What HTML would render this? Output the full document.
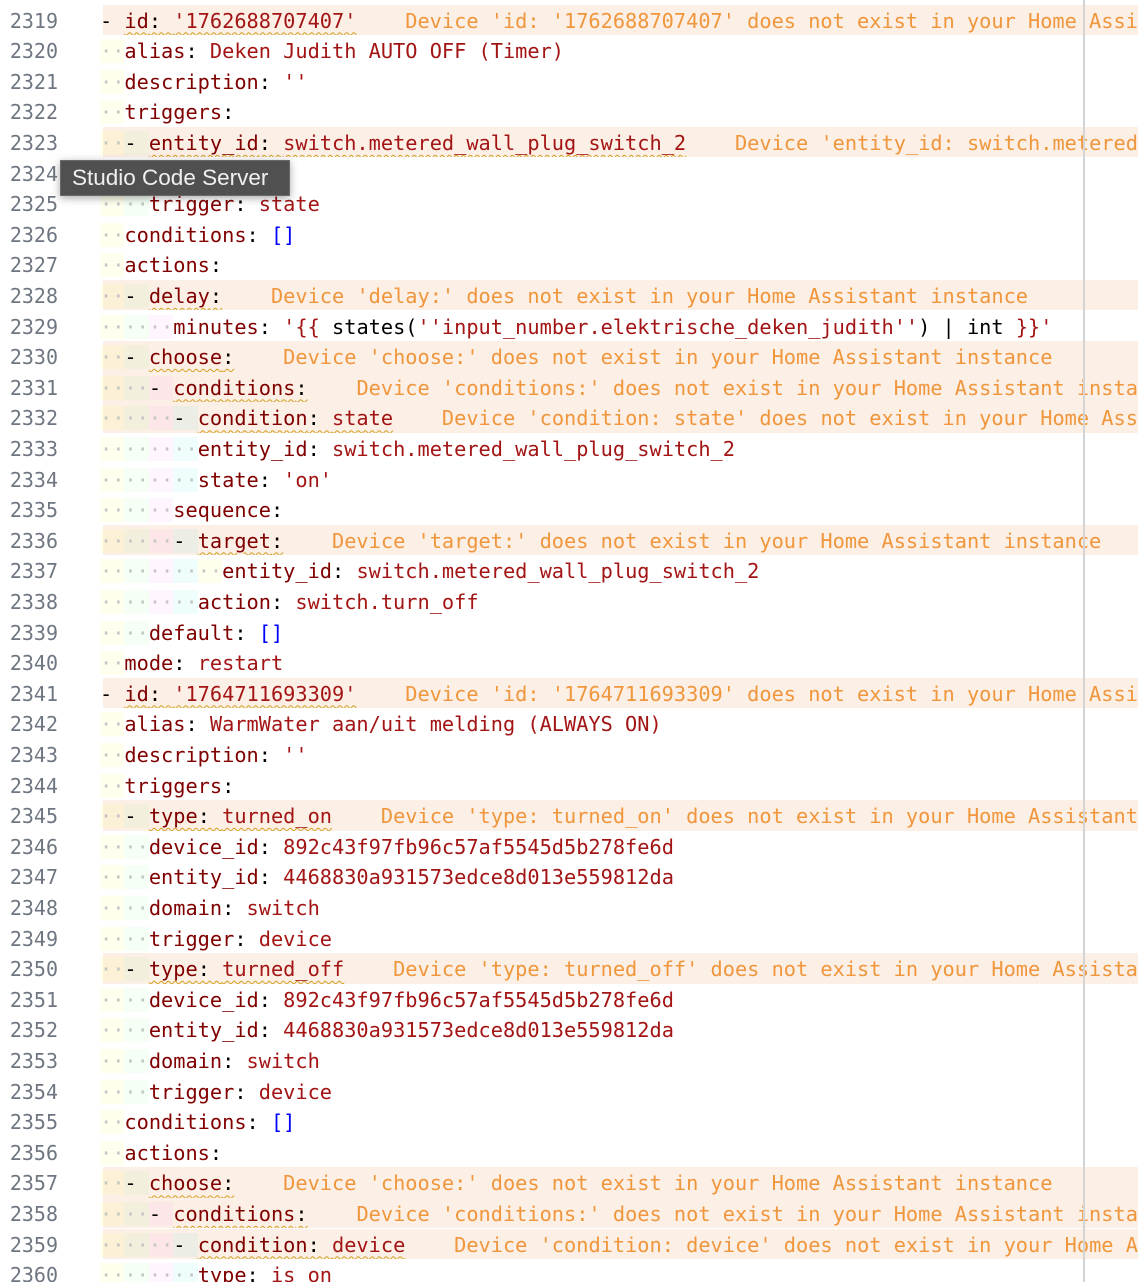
<!DOCTYPE html>
<html><head><meta charset="utf-8"><style>
body{margin:0;width:1138px;height:1282px;overflow:hidden;background:#fff;position:relative;font-family:"DejaVu Sans Mono","Liberation Mono",monospace}
.r{position:absolute;left:0;width:1138px;height:30.6px;overflow:hidden}
.w{position:absolute;left:103px;right:0;top:0;bottom:0;background:#fcefe5}
.n{position:absolute;left:0;width:58px;text-align:right;color:#6e7681;font-size:20px;line-height:30.6px;top:1px}
.c{position:absolute;left:100px;top:1px;white-space:pre;font-size:20.3px;line-height:30.6px;color:#000}
.d{color:#c4c4c4}
.a{background:rgba(255,255,64,.09)}.b{background:rgba(127,255,127,.08)}.p{background:rgba(255,127,255,.08)}.q{background:rgba(79,236,236,.09)}.e{background:rgba(255,255,64,.09)}
.k{color:#800000}.v{color:#a31515}.bl{color:#0000ff}
.u{text-decoration:underline wavy #d4a020;text-decoration-thickness:1px;text-underline-offset:4px}
.m{color:#f0963c}
.ruler{position:absolute;left:1083px;top:0;width:2px;height:1282px;background:#d4d4d4}
.tip{position:absolute;left:60px;top:160px;width:230px;height:36px;background:#505050;border:1px solid #6a6a6a;box-sizing:border-box;color:#f0f0f0;font-family:"Liberation Sans",sans-serif;font-size:22.5px;line-height:34px;padding-left:11px;white-space:nowrap;overflow:hidden;box-shadow:0 2px 8px rgba(0,0,0,.35)}
</style></head><body>
<div class="r" style="top:4.5px"><div class="w"></div><div class="n">2319</div><div class="c">- <span class="u"><span class="k">id</span>: <span class="v">'1762688707407'</span></span>    <span class="m">Device 'id: '1762688707407' does not exist in your Home Assistant instance</span></div></div>
<div class="r" style="top:35.1px"><div class="n">2320</div><div class="c"><span class="d a">··</span><span class="k">alias</span>: <span class="v">Deken Judith AUTO OFF (Timer)</span></div></div>
<div class="r" style="top:65.7px"><div class="n">2321</div><div class="c"><span class="d a">··</span><span class="k">description</span>: <span class="v">''</span></div></div>
<div class="r" style="top:96.3px"><div class="n">2322</div><div class="c"><span class="d a">··</span><span class="k">triggers</span>:</div></div>
<div class="r" style="top:126.9px"><div class="w"></div><div class="n">2323</div><div class="c"><span class="d a">··</span><span class="b">- </span><span class="u"><span class="k">entity_id</span>: <span class="v">switch.metered_wall_plug_switch_2</span></span>    <span class="m">Device 'entity_id: switch.metered_wall_plug_switch_2' does not exist</span></div></div>
<div class="r" style="top:157.5px"><div class="n">2324</div><div class="c"><span class="d a">··</span><span class="d b">··</span><span class="k">to</span>: <span class="v">'on'</span></div></div>
<div class="r" style="top:188.1px"><div class="n">2325</div><div class="c"><span class="d a">··</span><span class="d b">··</span><span class="k">trigger</span>: <span class="v">state</span></div></div>
<div class="r" style="top:218.7px"><div class="n">2326</div><div class="c"><span class="d a">··</span><span class="k">conditions</span>: <span class="bl">[]</span></div></div>
<div class="r" style="top:249.3px"><div class="n">2327</div><div class="c"><span class="d a">··</span><span class="k">actions</span>:</div></div>
<div class="r" style="top:279.9px"><div class="w"></div><div class="n">2328</div><div class="c"><span class="d a">··</span><span class="b">- </span><span class="u"><span class="k">delay</span>:</span>    <span class="m">Device 'delay:' does not exist in your Home Assistant instance</span></div></div>
<div class="r" style="top:310.5px"><div class="n">2329</div><div class="c"><span class="d a">··</span><span class="d b">··</span><span class="d p">··</span><span class="k">minutes</span>: <span class="v">'{{</span> states(<span class="v">''input_number.elektrische_deken_judith''</span>) | int <span class="v">}}'</span></div></div>
<div class="r" style="top:341.1px"><div class="w"></div><div class="n">2330</div><div class="c"><span class="d a">··</span><span class="b">- </span><span class="u"><span class="k">choose</span>:</span>    <span class="m">Device 'choose:' does not exist in your Home Assistant instance</span></div></div>
<div class="r" style="top:371.7px"><div class="w"></div><div class="n">2331</div><div class="c"><span class="d a">··</span><span class="d b">··</span><span class="p">- </span><span class="u"><span class="k">conditions</span>:</span>    <span class="m">Device 'conditions:' does not exist in your Home Assistant instance</span></div></div>
<div class="r" style="top:402.3px"><div class="w"></div><div class="n">2332</div><div class="c"><span class="d a">··</span><span class="d b">··</span><span class="d p">··</span><span class="q">- </span><span class="u"><span class="k">condition</span>: <span class="v">state</span></span>    <span class="m">Device 'condition: state' does not exist in your Home Assistant instance</span></div></div>
<div class="r" style="top:432.9px"><div class="n">2333</div><div class="c"><span class="d a">··</span><span class="d b">··</span><span class="d p">··</span><span class="d q">··</span><span class="k">entity_id</span>: <span class="v">switch.metered_wall_plug_switch_2</span></div></div>
<div class="r" style="top:463.5px"><div class="n">2334</div><div class="c"><span class="d a">··</span><span class="d b">··</span><span class="d p">··</span><span class="d q">··</span><span class="k">state</span>: <span class="v">'on'</span></div></div>
<div class="r" style="top:494.1px"><div class="n">2335</div><div class="c"><span class="d a">··</span><span class="d b">··</span><span class="d p">··</span><span class="k">sequence</span>:</div></div>
<div class="r" style="top:524.7px"><div class="w"></div><div class="n">2336</div><div class="c"><span class="d a">··</span><span class="d b">··</span><span class="d p">··</span><span class="q">- </span><span class="u"><span class="k">target</span>:</span>    <span class="m">Device 'target:' does not exist in your Home Assistant instance</span></div></div>
<div class="r" style="top:555.3px"><div class="n">2337</div><div class="c"><span class="d a">··</span><span class="d b">··</span><span class="d p">··</span><span class="d q">··</span><span class="d e">··</span><span class="k">entity_id</span>: <span class="v">switch.metered_wall_plug_switch_2</span></div></div>
<div class="r" style="top:585.9px"><div class="n">2338</div><div class="c"><span class="d a">··</span><span class="d b">··</span><span class="d p">··</span><span class="d q">··</span><span class="k">action</span>: <span class="v">switch.turn_off</span></div></div>
<div class="r" style="top:616.5px"><div class="n">2339</div><div class="c"><span class="d a">··</span><span class="d b">··</span><span class="k">default</span>: <span class="bl">[]</span></div></div>
<div class="r" style="top:647.1px"><div class="n">2340</div><div class="c"><span class="d a">··</span><span class="k">mode</span>: <span class="v">restart</span></div></div>
<div class="r" style="top:677.7px"><div class="w"></div><div class="n">2341</div><div class="c">- <span class="u"><span class="k">id</span>: <span class="v">'1764711693309'</span></span>    <span class="m">Device 'id: '1764711693309' does not exist in your Home Assistant instance</span></div></div>
<div class="r" style="top:708.3px"><div class="n">2342</div><div class="c"><span class="d a">··</span><span class="k">alias</span>: <span class="v">WarmWater aan/uit melding (ALWAYS ON)</span></div></div>
<div class="r" style="top:738.9px"><div class="n">2343</div><div class="c"><span class="d a">··</span><span class="k">description</span>: <span class="v">''</span></div></div>
<div class="r" style="top:769.5px"><div class="n">2344</div><div class="c"><span class="d a">··</span><span class="k">triggers</span>:</div></div>
<div class="r" style="top:800.1px"><div class="w"></div><div class="n">2345</div><div class="c"><span class="d a">··</span><span class="b">- </span><span class="u"><span class="k">type</span>: <span class="v">turned_on</span></span>    <span class="m">Device 'type: turned_on' does not exist in your Home Assistant instance</span></div></div>
<div class="r" style="top:830.7px"><div class="n">2346</div><div class="c"><span class="d a">··</span><span class="d b">··</span><span class="k">device_id</span>: <span class="v">892c43f97fb96c57af5545d5b278fe6d</span></div></div>
<div class="r" style="top:861.3px"><div class="n">2347</div><div class="c"><span class="d a">··</span><span class="d b">··</span><span class="k">entity_id</span>: <span class="v">4468830a931573edce8d013e559812da</span></div></div>
<div class="r" style="top:891.9px"><div class="n">2348</div><div class="c"><span class="d a">··</span><span class="d b">··</span><span class="k">domain</span>: <span class="v">switch</span></div></div>
<div class="r" style="top:922.5px"><div class="n">2349</div><div class="c"><span class="d a">··</span><span class="d b">··</span><span class="k">trigger</span>: <span class="v">device</span></div></div>
<div class="r" style="top:953.1px"><div class="w"></div><div class="n">2350</div><div class="c"><span class="d a">··</span><span class="b">- </span><span class="u"><span class="k">type</span>: <span class="v">turned_off</span></span>    <span class="m">Device 'type: turned_off' does not exist in your Home Assistant instance</span></div></div>
<div class="r" style="top:983.7px"><div class="n">2351</div><div class="c"><span class="d a">··</span><span class="d b">··</span><span class="k">device_id</span>: <span class="v">892c43f97fb96c57af5545d5b278fe6d</span></div></div>
<div class="r" style="top:1014.3px"><div class="n">2352</div><div class="c"><span class="d a">··</span><span class="d b">··</span><span class="k">entity_id</span>: <span class="v">4468830a931573edce8d013e559812da</span></div></div>
<div class="r" style="top:1044.9px"><div class="n">2353</div><div class="c"><span class="d a">··</span><span class="d b">··</span><span class="k">domain</span>: <span class="v">switch</span></div></div>
<div class="r" style="top:1075.5px"><div class="n">2354</div><div class="c"><span class="d a">··</span><span class="d b">··</span><span class="k">trigger</span>: <span class="v">device</span></div></div>
<div class="r" style="top:1106.1px"><div class="n">2355</div><div class="c"><span class="d a">··</span><span class="k">conditions</span>: <span class="bl">[]</span></div></div>
<div class="r" style="top:1136.7px"><div class="n">2356</div><div class="c"><span class="d a">··</span><span class="k">actions</span>:</div></div>
<div class="r" style="top:1167.3px"><div class="w"></div><div class="n">2357</div><div class="c"><span class="d a">··</span><span class="b">- </span><span class="u"><span class="k">choose</span>:</span>    <span class="m">Device 'choose:' does not exist in your Home Assistant instance</span></div></div>
<div class="r" style="top:1197.9px"><div class="w"></div><div class="n">2358</div><div class="c"><span class="d a">··</span><span class="d b">··</span><span class="p">- </span><span class="u"><span class="k">conditions</span>:</span>    <span class="m">Device 'conditions:' does not exist in your Home Assistant instance</span></div></div>
<div class="r" style="top:1228.5px"><div class="w"></div><div class="n">2359</div><div class="c"><span class="d a">··</span><span class="d b">··</span><span class="d p">··</span><span class="q">- </span><span class="u"><span class="k">condition</span>: <span class="v">device</span></span>    <span class="m">Device 'condition: device' does not exist in your Home Assistant instance</span></div></div>
<div class="r" style="top:1259.1px;height:22.9px"><div class="n">2360</div><div class="c"><span class="d a">··</span><span class="d b">··</span><span class="d p">··</span><span class="d q">··</span><span class="k">type</span>: <span class="v">is_on</span></div></div>
<div class="ruler"></div>
<div class="tip">Studio Code Server</div>
</body></html>
